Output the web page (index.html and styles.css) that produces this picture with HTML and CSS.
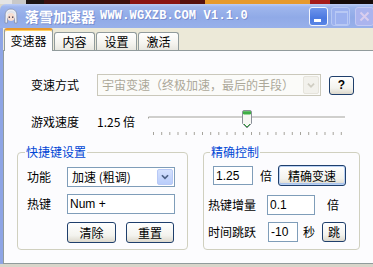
FILE: index.html
```html
<!DOCTYPE html>
<html lang="zh-CN">
<head>
    <meta charset="UTF-8">
    <title>落雪加速器</title>
    <link rel="stylesheet" href="styles.css">
</head>
<body>
    <div class="desk"></div>
    <div class="window">
        <div class="titlebar">
            <svg class="app-icon" viewBox="0 0 14 16">
                <path d="M7 1 C2.5 1 1 4.5 1.2 8 L1 15 L3.5 15 L3.5 10 L10.5 10 L10.5 15 L13 15 L12.8 8 C13 4.5 11.5 1 7 1 Z" fill="#eceef4" stroke="#8890a8" stroke-width="0.8"/>
                <ellipse cx="7" cy="9" rx="3.6" ry="4" fill="#f7ddd0"/>
                <path d="M3.2 6.5 C4.5 4 9.5 4 10.8 6.5 L10.5 4.5 C9 2.5 5 2.5 3.5 4.5 Z" fill="#dfe2ea"/>
                <rect x="4.6" y="8.4" width="1.4" height="1.6" fill="#5a5060"/>
                <rect x="8" y="8.4" width="1.4" height="1.6" fill="#5a5060"/>
            </svg>
            <span class="title-cn">落雪加速器</span>
            <span class="title-en">WWW.WGXZB.COM V1.1.0</span>
            <div class="caption-btns">
                <span class="cap cap-min"></span>
                <span class="cap cap-max"></span>
                <span class="cap cap-close">
                    <svg viewBox="0 0 17 17"><path d="M4.5 4.5 L12.5 12.5 M12.5 4.5 L4.5 12.5" stroke="#d9cdee" stroke-width="2"/></svg>
                </span>
            </div>
        </div>

        <div class="client">
            <div class="tabs">
                <span class="tab active">变速器</span>
                <span class="tab">内容</span>
                <span class="tab">设置</span>
                <span class="tab">激活</span>
            </div>

            <div class="panel">
                <div class="row row-mode">
                    <span class="label">变速方式</span>
                    <div class="combo combo-wide disabled">
                        <span class="combo-text">宇宙变速（终极加速，最后的手段）</span>
                        <span class="drop"><svg viewBox="0 0 16 16"><path d="M4.5 6.5 L8 10 L11.5 6.5" fill="none" stroke="#cfcdc2" stroke-width="2"/></svg></span>
                    </div>
                    <button class="btn btn-help">?</button>
                </div>

                <div class="row row-speed">
                    <span class="label">游戏速度</span>
                    <span class="speed-val">1.25 倍</span>
                    <svg class="slider" width="200" height="28" viewBox="0 0 200 28">
                        <path d="M1.5 10.5 V9 H198" fill="none" stroke="#a3a29c"/>
                        <path d="M2 10.5 H198" stroke="#ffffff"/>
                        <g stroke="#a5a39c">
                            <line x1="6.5" y1="24" x2="6.5" y2="27"/>
                            <line x1="14.7" y1="24" x2="14.7" y2="27"/>
                            <line x1="22.8" y1="24" x2="22.8" y2="27"/>
                            <line x1="31" y1="24" x2="31" y2="27"/>
                            <line x1="39.2" y1="24" x2="39.2" y2="27"/>
                            <line x1="47.3" y1="24" x2="47.3" y2="27"/>
                            <line x1="55.5" y1="24" x2="55.5" y2="27"/>
                            <line x1="63.7" y1="24" x2="63.7" y2="27"/>
                            <line x1="71.8" y1="24" x2="71.8" y2="27"/>
                            <line x1="80" y1="24" x2="80" y2="27"/>
                            <line x1="88.2" y1="24" x2="88.2" y2="27"/>
                            <line x1="96.3" y1="24" x2="96.3" y2="27"/>
                            <line x1="104.5" y1="24" x2="104.5" y2="27"/>
                            <line x1="112.7" y1="24" x2="112.7" y2="27"/>
                            <line x1="120.8" y1="24" x2="120.8" y2="27"/>
                            <line x1="129" y1="24" x2="129" y2="27"/>
                            <line x1="137.2" y1="24" x2="137.2" y2="27"/>
                            <line x1="145.3" y1="24" x2="145.3" y2="27"/>
                            <line x1="153.5" y1="24" x2="153.5" y2="27"/>
                            <line x1="161.7" y1="24" x2="161.7" y2="27"/>
                            <line x1="169.8" y1="24" x2="169.8" y2="27"/>
                            <line x1="178" y1="24" x2="178" y2="27"/>
                            <line x1="186.2" y1="24" x2="186.2" y2="27"/>
                            <line x1="194.3" y1="24" x2="194.3" y2="27"/>
                        </g>
                        <!-- thumb -->
                        <path d="M95.5 4 Q95.5 2.5 97 2.5 H103 Q104.5 2.5 104.5 4 V15.5 L100 20 L95.5 15.5 Z" fill="#f7f7f4" stroke="#8b9099"/>
                        <path d="M96 3.2 H104 V6 H96 Z" fill="#3fae45"/>
                        <path d="M96.5 6.5 H103.5" stroke="#9ad79a"/>
                        <path d="M97 16 L100 19" stroke="#2f9a3a"/>
                        <path d="M103 16 L100 19" stroke="#2f9a3a"/>
                    </svg>
                </div>

                <div class="groups">
                    <fieldset class="group group-keys">
                        <legend>快捷键设置</legend>
                        <div class="field-row">
                            <span class="glabel">功能</span>
                            <div class="combo combo-small">
                                <span class="combo-text">加速 (粗调)</span>
                                <span class="drop"><svg viewBox="0 0 16 16"><path d="M4.5 6 L8 9.5 L11.5 6" fill="none" stroke="#4d6185" stroke-width="2"/></svg></span>
                            </div>
                        </div>
                        <div class="field-row">
                            <span class="glabel">热键</span>
                            <input class="text-in in-key" type="text" value="Num +">
                        </div>
                        <div class="btn-row">
                            <button class="btn btn-clear">清除</button>
                            <button class="btn btn-reset">重置</button>
                        </div>
                    </fieldset>

                    <fieldset class="group group-precise">
                        <legend>精确控制</legend>
                        <div class="prow prow-first">
                            <input class="text-in in-rate" type="text" value="1.25">
                            <span class="unit unit-rate">倍</span>
                            <button class="btn btn-apply">精确变速</button>
                        </div>
                        <div class="prow prow-step">
                            <span class="plabel">热键增量</span>
                            <input class="text-in in-step" type="text" value="0.1">
                            <span class="unit unit-step">倍</span>
                        </div>
                        <div class="prow prow-jump">
                            <span class="plabel">时间跳跃</span>
                            <input class="text-in in-jump" type="text" value="-10">
                            <span class="unit unit-sec">秒</span>
                            <button class="btn btn-jump">跳</button>
                        </div>
                    </fieldset>
                </div>
            </div>
        </div>
    </div>
</body>
</html>
```

FILE: styles.css
```css
/* Basic page */
* {
    box-sizing: border-box;
}

body {
    margin: 0;
    width: 373px;
    height: 267px;
    overflow: hidden;
    background-color: #d8d5ca;
    font-family: "Noto Sans CJK SC", "Liberation Sans", sans-serif;
    font-size: 12px;
    color: #000;
}

/* strip of the desktop above the window */
.desk {
    height: 4px;
    background: linear-gradient(90deg,
        #e4e4e4 0 12px, #c8c8c8 12px 26px, #1c1414 26px 44px,
        #3c1010 44px 130px, #8a1414 130px 180px, #561010 180px 205px,
        #e69a2c 205px 310px, #a51a1a 310px 330px, #140a0a 330px);
}

.window {
    width: 384px;
}

/* Title bar */
.titlebar {
    height: 24px;
    display: flex;
    align-items: center;
    padding-left: 4px;
    background: linear-gradient(#bccdf6, #9fb6ed 3px, #90aae7 55%, #98b0ea);
    border-radius: 6px 6px 0 0;
}

.app-icon {
    width: 14px;
    height: 16px;
    margin-right: 7px;
}

.title-cn {
    color: #fff;
    font-weight: bold;
    font-size: 14px;
    line-height: 1;
    text-shadow: 1px 1px 0 #7a8fd0;
}

.title-en {
    margin-left: 5px;
    font-family: "Liberation Mono", monospace;
    font-weight: bold;
    font-size: 12px;
    letter-spacing: 0.2px;
    color: #fff;
    text-shadow: 1px 1px 0 #7a8fd0;
}

.caption-btns {
    margin-left: auto;
    margin-right: 10px;
    display: flex;
    gap: 3px;
}

.cap {
    width: 19px;
    height: 19px;
    border-radius: 3px;
    border: 1px solid #dfe7fb;
    position: relative;
}

.cap-min {
    background: linear-gradient(#6f95ec, #4a78e0 60%, #5a86e6);
    border-color: #f2f5fd;
}

.cap-min::after {
    content: "";
    position: absolute;
    left: 4px;
    bottom: 3px;
    width: 7px;
    height: 3px;
    background: #fff;
}

.cap-max {
    background: #9cb1ef;
    border-color: #b7c8f5;
}

.cap-max::after {
    content: "";
    position: absolute;
    left: 3px;
    top: 3px;
    width: 11px;
    height: 11px;
    border: 1px solid #b8c8f4;
    border-top-width: 2px;
}

.cap-close {
    margin-left: 2px;
    background: #abb4ee;
    border-color: #c3c9f3;
}

.cap-close svg {
    display: block;
    width: 17px;
    height: 17px;
}

/* Client area */
.client {
    background-color: #ece9d8;
    border-left: 3px solid #8ea5e5;
}

.tabs {
    height: 22px;
    display: flex;
    align-items: flex-end;
    padding-left: 1px;
}

.tab {
    width: 41px;
    height: 18px;
    margin-right: 1px;
    border: 1px solid #919b9c;
    border-bottom: none;
    border-radius: 3px 3px 0 0;
    background: linear-gradient(#ffffff, #f5f4ef 60%, #e8e7e0);
    display: flex;
    align-items: center;
    justify-content: center;
    line-height: 1;
}

.tab.active {
    width: 49px;
    height: 23px;
    margin-bottom: -1px;
    background: #fcfcfe;
    border-top: 2px solid #e8992e;
    box-shadow: inset 0 1px 0 #ffcf5c;
    position: relative;
    z-index: 1;
}

.panel {
    height: 214px;
    border: 1px solid #919b9c;
    background-color: #fcfcfe;
    padding: 23px 0 0 13px;
}

/* top rows */
.row {
    display: flex;
    align-items: center;
    margin-left: 14px;
}

.row-mode {
    height: 22px;
}

.label {
    width: 66px;
    line-height: 1;
}

.combo {
    display: flex;
    align-items: center;
    background: #fff;
    border: 1px solid #7f9db9;
}

.combo-text {
    flex: 1;
    padding-left: 4px;
    line-height: 16px;
    white-space: nowrap;
}

.drop {
    width: 16px;
    height: calc(100% - 2px);
    margin-right: 1px;
    border-radius: 2px;
    background: linear-gradient(#d5e1fd, #b9cdfb);
    border: 1px solid #b8c9f6;
    display: flex;
    align-items: center;
    justify-content: center;
    flex-shrink: 0;
}

.drop svg {
    width: 16px;
    height: 16px;
}

.combo-wide {
    width: 224px;
    height: 22px;
}

.combo.disabled {
    background: #fbfbf9;
    border-color: #cac8bb;
    color: #aca899;
}

.combo.disabled .drop {
    background: #f2f1ec;
    border-color: #e6e4dc;
}

.btn {
    font-family: "Noto Sans CJK SC", "Liberation Sans", sans-serif;
    font-size: 12px;
    line-height: 1;
    color: #000;
    padding: 0;
    border: 1px solid #1f3f6c;
    border-radius: 3px;
    background: linear-gradient(#ffffff, #f3f3ee 65%, #dcd8cc);
}

.btn-help {
    width: 25px;
    height: 19px;
    margin-left: 8px;
    font-family: "Liberation Sans", sans-serif;
    font-weight: bold;
    font-size: 12px;
}

.row-speed {
    margin-top: 12px;
    height: 28px;
}

.speed-val {
    width: 50px;
    line-height: 1;
}

.slider {
    display: block;
}

/* group boxes */
.groups {
    margin-top: 8px;
    display: flex;
    gap: 15px;
}

.group {
    margin: 0;
    border: 1px solid #d0d0bf;
    border-radius: 4px;
    min-width: 0;
}

.group legend {
    padding: 0 1px;
    margin-left: -2px;
    color: #0046d5;
    font-size: 12px;
    line-height: 16px;
}

.group-keys {
    width: 171px;
    padding: 7px 12px 6px 9px;
}

.field-row {
    display: flex;
    align-items: center;
    height: 20px;
    margin-bottom: 7px;
}

.field-row + .field-row {
    margin-bottom: 8px;
}

.glabel {
    width: 40px;
    line-height: 1;
}

.combo-small {
    width: 108px;
    height: 20px;
}

.text-in {
    height: 20px;
    margin: 0;
    padding: 0 2px;
    border: 1px solid #7f9db9;
    background: #fff;
    font-family: "Liberation Sans", sans-serif;
    font-size: 12px;
    color: #000;
}

.in-key {
    width: 108px;
}

.btn-row {
    display: flex;
    gap: 10px;
    margin-left: 40px;
}

.btn-clear {
    width: 49px;
    height: 21px;
}

.btn-reset {
    width: 48px;
    height: 21px;
}

.group-precise {
    width: 157px;
    padding: 5px 4px 0 4px;
}

.group-precise legend {
    margin-left: 2px;
}

.prow {
    display: flex;
    align-items: center;
}

.prow-first {
    margin-left: 5px;
    height: 21px;
}

.in-rate {
    width: 40px;
    height: 19px;
}

.unit {
    line-height: 1;
}

.unit-rate {
    margin-left: 7px;
}

.btn-apply {
    width: 68px;
    height: 21px;
    margin-left: 6px;
    box-shadow: inset 0 0 0 1px #b9d1f4, inset 0 -1px 0 1px #a9c3ec;
}

.plabel {
    width: 52px;
    line-height: 1;
}

.prow-step {
    margin-top: 9px;
    height: 20px;
}

.in-step {
    width: 48px;
    margin-left: 7px;
}

.unit-step {
    margin-left: 12px;
}

.prow-jump {
    margin-top: 7px;
    height: 20px;
}

.in-jump {
    width: 30px;
    margin-left: 8px;
}

.unit-sec {
    margin-left: 5px;
}

.btn-jump {
    width: 24px;
    height: 20px;
    margin-left: 7px;
}
```
